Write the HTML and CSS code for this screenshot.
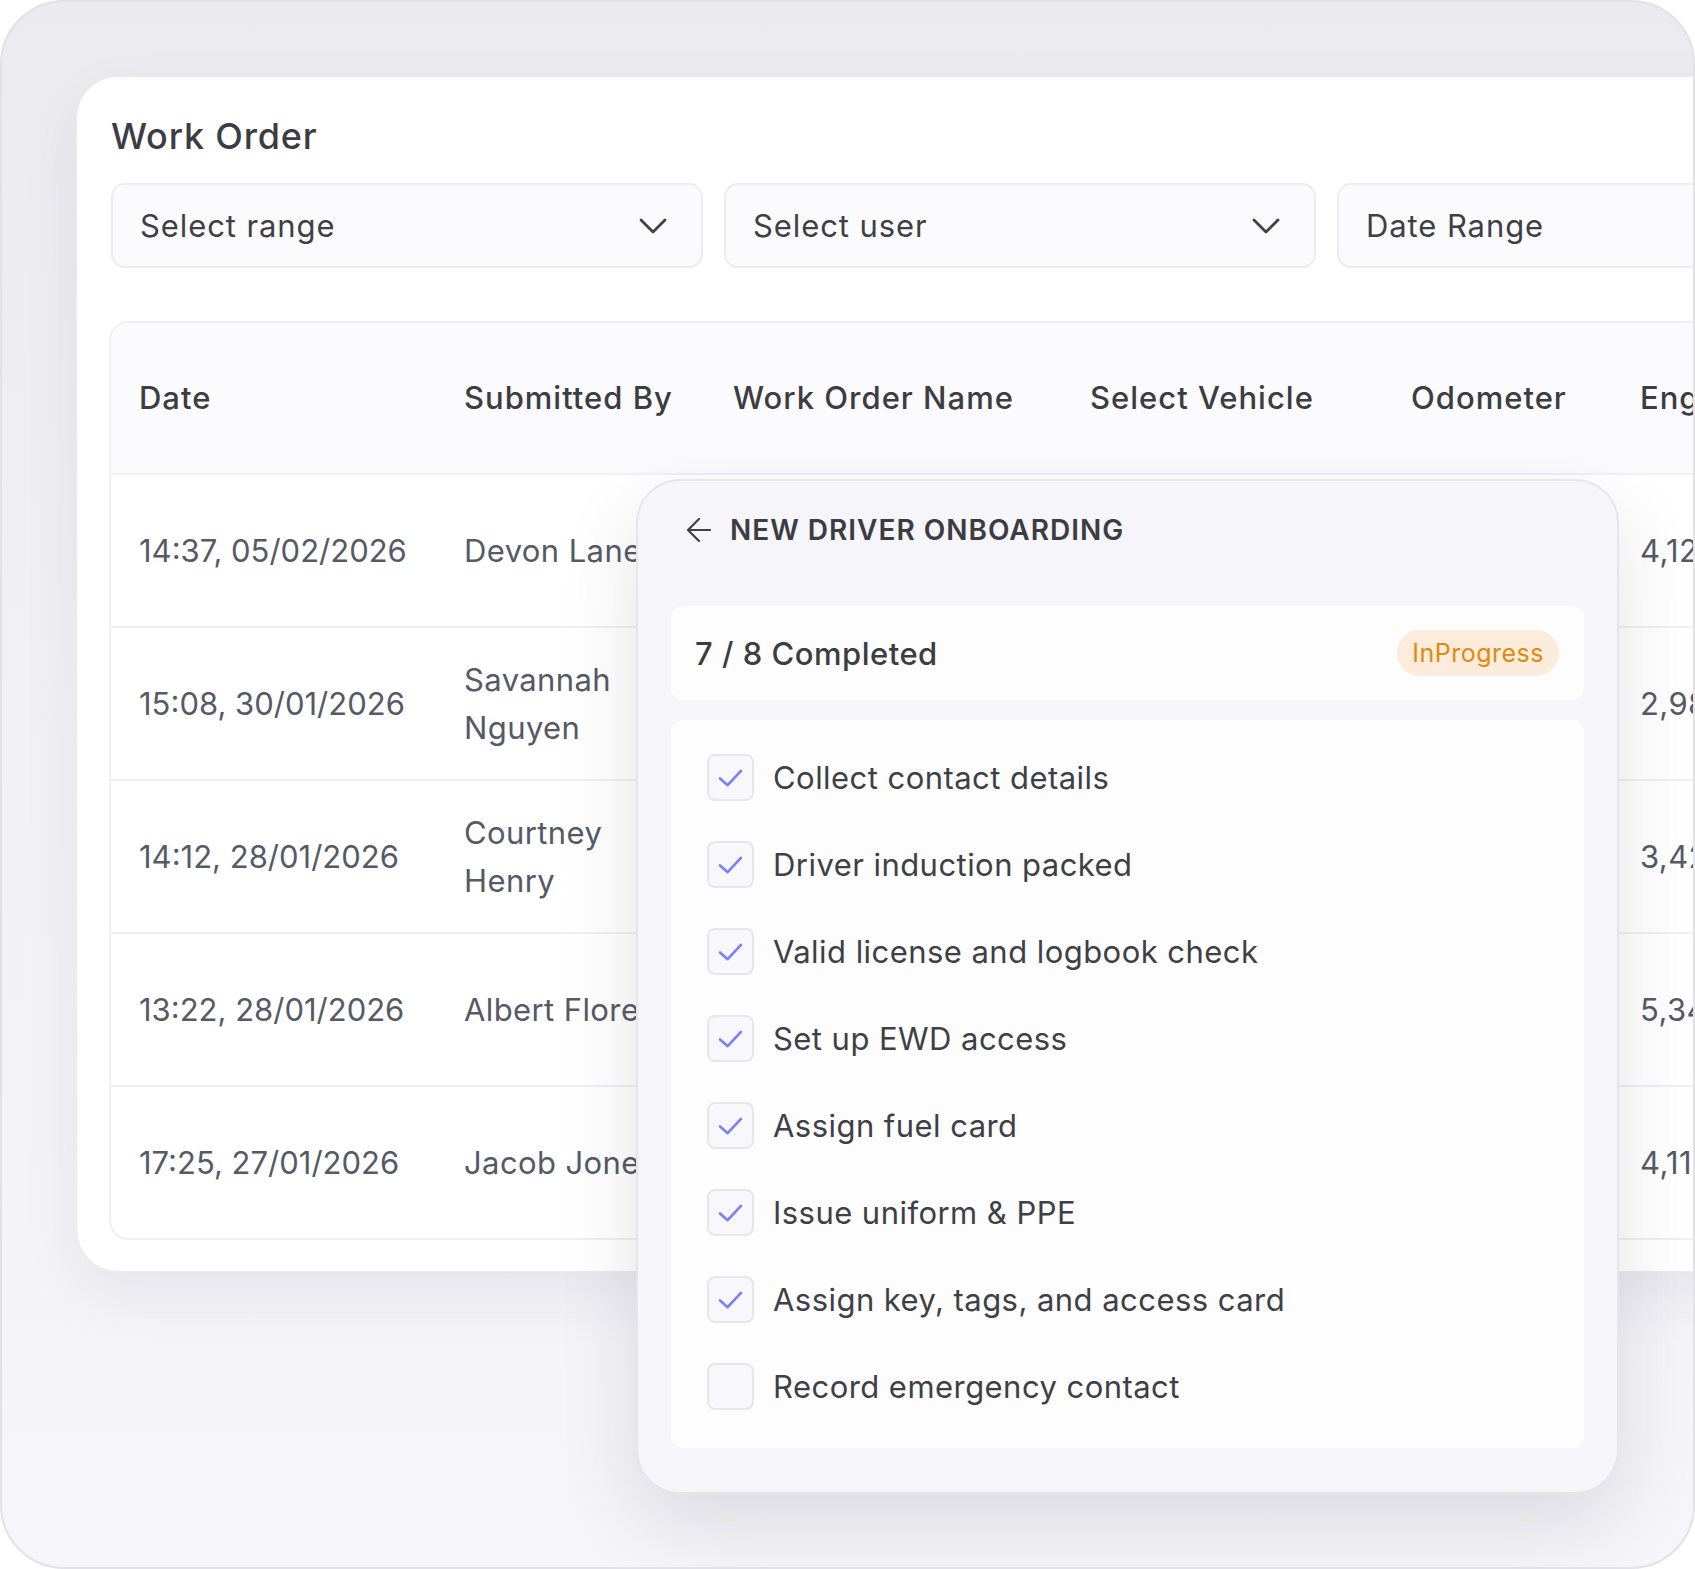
FILE: index.html
```html
<!DOCTYPE html>
<html lang="en">
<head>
    <meta charset="UTF-8">
    <meta name="viewport" content="width=device-width, initial-scale=1.0">
    <title>Work Order</title>
    <link rel="stylesheet" href="styles.css">
</head>
<body>
    <div class="frame">
        <div class="card">
            <h1 class="title">Work Order</h1>

            <div class="filters">
                <div class="select">
                    <span>Select range</span>
                    <svg class="chevron" viewBox="0 0 28 16"><path d="M2 2 L14 14 L26 2"/></svg>
                </div>
                <div class="select">
                    <span>Select user</span>
                    <svg class="chevron" viewBox="0 0 28 16"><path d="M2 2 L14 14 L26 2"/></svg>
                </div>
                <div class="select">
                    <span>Date Range</span>
                </div>
            </div>

            <div class="table">
                <div class="row head">
                    <div class="cell">Date</div>
                    <div class="cell">Submitted By</div>
                    <div class="cell">Work Order Name</div>
                    <div class="cell">Select Vehicle</div>
                    <div class="cell">Odometer</div>
                    <div class="cell">Engine Hours</div>
                </div>
                <div class="row">
                    <div class="cell date">14:37, 05/02/2026</div>
                    <div class="cell name">Devon Lane</div>
                    <div class="cell">New Driver Onboarding</div>
                    <div class="cell">Volvo FH16</div>
                    <div class="cell">182,400</div>
                    <div class="cell">4,125</div>
                </div>
                <div class="row">
                    <div class="cell date">15:08, 30/01/2026</div>
                    <div class="cell name">Savannah Nguyen</div>
                    <div class="cell">Service Check</div>
                    <div class="cell">Scania R500</div>
                    <div class="cell">96,210</div>
                    <div class="cell">2,980</div>
                </div>
                <div class="row">
                    <div class="cell date">14:12, 28/01/2026</div>
                    <div class="cell name">Courtney Henry</div>
                    <div class="cell">Tyre Replacement</div>
                    <div class="cell">Isuzu FVR</div>
                    <div class="cell">140,050</div>
                    <div class="cell">3,420</div>
                </div>
                <div class="row">
                    <div class="cell date">13:22, 28/01/2026</div>
                    <div class="cell name">Albert Flores</div>
                    <div class="cell">Brake Inspection</div>
                    <div class="cell">Kenworth T610</div>
                    <div class="cell">210,880</div>
                    <div class="cell">5,340</div>
                </div>
                <div class="row">
                    <div class="cell date">17:25, 27/01/2026</div>
                    <div class="cell name">Jacob Jones</div>
                    <div class="cell">Oil Change</div>
                    <div class="cell">Hino 500</div>
                    <div class="cell">120,600</div>
                    <div class="cell">4,118</div>
                </div>
            </div>
        </div>

        <div class="panel">
            <div class="panel-header">
                <svg class="back" viewBox="0 0 26 26"><path d="M24 13 H2 M13 2 L2 13 L13 24"/></svg>
                <h2>NEW DRIVER ONBOARDING</h2>
            </div>

            <div class="progress">
                <span>7 / 8 Completed</span>
                <span class="badge">InProgress</span>
            </div>

            <ul class="checklist">
                <li><span class="box"><svg viewBox="0 0 26 20"><path d="M2 10 L10 17 L24 2"/></svg></span>Collect contact details</li>
                <li><span class="box"><svg viewBox="0 0 26 20"><path d="M2 10 L10 17 L24 2"/></svg></span>Driver induction packed</li>
                <li><span class="box"><svg viewBox="0 0 26 20"><path d="M2 10 L10 17 L24 2"/></svg></span>Valid license and logbook check</li>
                <li><span class="box"><svg viewBox="0 0 26 20"><path d="M2 10 L10 17 L24 2"/></svg></span>Set up EWD access</li>
                <li><span class="box"><svg viewBox="0 0 26 20"><path d="M2 10 L10 17 L24 2"/></svg></span>Assign fuel card</li>
                <li><span class="box"><svg viewBox="0 0 26 20"><path d="M2 10 L10 17 L24 2"/></svg></span>Issue uniform &amp; PPE</li>
                <li><span class="box"><svg viewBox="0 0 26 20"><path d="M2 10 L10 17 L24 2"/></svg></span>Assign key, tags, and access card</li>
                <li><span class="box"></span>Record emergency contact</li>
            </ul>
        </div>
    </div>
</body>
</html>
```

FILE: styles.css
```css
body {
    margin: 0;
    background: #ffffff;
    font-family: 'Inter', 'Open Sans', sans-serif;
    color: #3f3f46;
}

.frame {
    position: relative;
    width: 1695px;
    height: 1569px;
    box-sizing: border-box;
    padding: 74px 0 0 74px;
    border: 2px solid #e2e1e7;
    border-radius: 64px;
    background: linear-gradient(180deg, #ebeaef 0%, #f1f0f4 45%, #f6f5f9 100%);
    overflow: hidden;
}

.card {
    width: 1700px;
    height: 1196px;
    box-sizing: border-box;
    padding: 36px 0 0 34px;
    background: #ffffff;
    border: 1px solid #ebeaef;
    border-radius: 42px;
    box-shadow: 0 24px 60px rgba(40, 40, 70, 0.07);
}

.title {
    margin: 0;
    font-size: 36px;
    line-height: 46px;
    font-weight: 500;
    letter-spacing: 0.8px;
    color: #3c3c43;
}

.filters {
    display: flex;
    gap: 21px;
    margin-top: 24px;
}

.select {
    display: flex;
    align-items: center;
    justify-content: space-between;
    width: 592px;
    height: 85px;
    box-sizing: border-box;
    padding: 0 34px 0 27px;
    background: #fbfbfd;
    border: 2px solid #edecf1;
    border-radius: 14px;
    font-size: 31px;
    letter-spacing: 0.9px;
    color: #3f3f46;
    flex-shrink: 0;
}

.chevron {
    width: 28px;
    height: 16px;
    fill: none;
    stroke: #3f3f46;
    stroke-width: 2.8;
    stroke-linecap: round;
    stroke-linejoin: round;
}

.table {
    width: 1700px;
    margin: 53px 0 0 -2px;
    border: 2px solid #f0eff4;
    border-radius: 20px;
    overflow: hidden;
}

.row {
    display: grid;
    grid-template-columns: 325px 269px 357px 321px 229px 240px;
    align-items: center;
    height: 151px;
    padding-left: 28px;
    border-bottom: 2px solid #f0eff4;
    font-size: 31px;
    letter-spacing: 0.4px;
    line-height: 48px;
    color: #555a66;
}

.row:last-child {
    border-bottom: none;
}

.row .cell {
    padding-right: 24px;
}

.row .date {
    letter-spacing: 0;
}

.row .name {
    padding-right: 40px;
}

.head {
    height: 150px;
    background: #fbfafd;
    font-weight: 500;
    letter-spacing: 1px;
    color: #3c3c43;
}

.panel {
    position: absolute;
    left: 634px;
    top: 477px;
    width: 983px;
    box-sizing: border-box;
    padding: 29px 33px 44px;
    background: #f6f5fa;
    border: 2px solid #e6e5ec;
    border-radius: 44px;
    box-shadow: 0 30px 80px rgba(30, 30, 60, 0.12);
}

.panel-header {
    display: flex;
    align-items: center;
    gap: 18px;
    height: 40px;
    padding-left: 15px;
}

.back {
    width: 26px;
    height: 26px;
    fill: none;
    stroke: #3f3f46;
    stroke-width: 2.2;
    stroke-linecap: round;
    stroke-linejoin: round;
}

.panel-header h2 {
    margin: 0;
    font-size: 28px;
    font-weight: 600;
    letter-spacing: 1px;
    color: #3c3c43;
}

.progress {
    display: flex;
    align-items: center;
    justify-content: space-between;
    height: 94px;
    margin-top: 56px;
    padding: 0 25px 0 24px;
    background: #fdfdfe;
    border-radius: 12px;
    font-size: 31px;
    font-weight: 500;
    letter-spacing: 0.5px;
    color: #3c3c43;
}

.badge {
    height: 46px;
    line-height: 46px;
    padding: 0 15px;
    background: #fdebdb;
    border-radius: 23px;
    font-size: 25px;
    font-weight: 400;
    letter-spacing: 0.5px;
    color: #df8a0e;
}

.checklist {
    list-style: none;
    margin: 20px 0 0;
    padding: 14px 0 18px 36px;
    background: #fdfdfe;
    border-radius: 12px;
}

.checklist li {
    display: flex;
    align-items: center;
    gap: 19px;
    height: 87px;
    font-size: 31px;
    letter-spacing: 0.45px;
    color: #3f3f46;
}

.box {
    display: flex;
    align-items: center;
    justify-content: center;
    width: 47px;
    height: 47px;
    box-sizing: border-box;
    border: 2px solid #e7e6ed;
    border-radius: 8px;
    background: #f8f7fb;
    flex-shrink: 0;
}

.box svg {
    width: 25px;
    height: 19px;
    margin-top: 2px;
    fill: none;
    stroke: #7b80f7;
    stroke-width: 2.8;
    stroke-linecap: round;
    stroke-linejoin: round;
}
```
